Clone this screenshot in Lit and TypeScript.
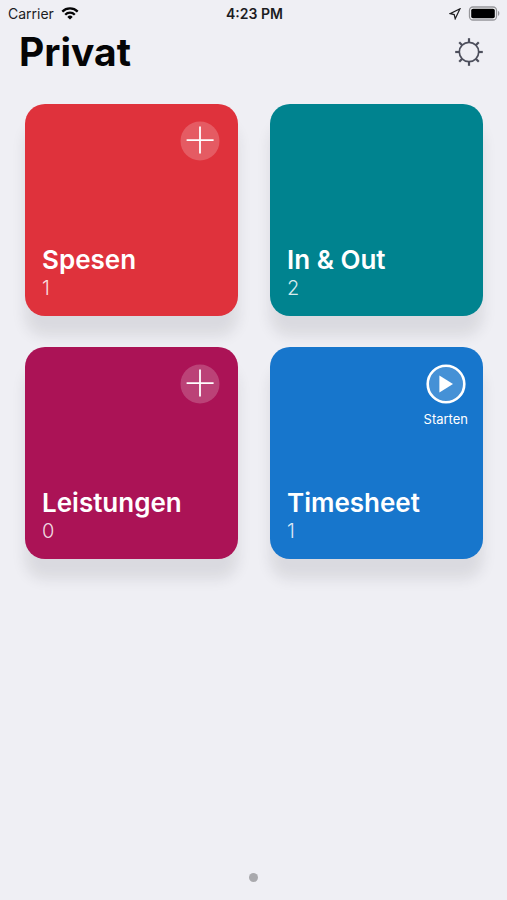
import { LitElement, html, css, svg, nothing } from "lit";
import { customElement } from "lit/decorators.js";

type Action = "add" | "start" | "none";

interface Category {
  name: string;
  count: number;
  color: string;
  action: Action;
}

const categories: Category[] = [
  { name: "Spesen", count: 1, color: "#df323c", action: "add" },
  { name: "In & Out", count: 2, color: "#00838f", action: "none" },
  { name: "Leistungen", count: 0, color: "#ab1356", action: "add" },
  { name: "Timesheet", count: 1, color: "#1776cc", action: "start" },
];

@customElement("status-bar")
export class StatusBar extends LitElement {
  static styles = css`
    :host {
      display: grid;
      grid-template-columns: 1fr auto 1fr;
      align-items: center;
      height: 28px;
      padding: 0 6px 0 8px;
      font-size: 14px;
      line-height: 20px;
      color: #1c1c1f;
    }
    .side {
      display: flex;
      align-items: center;
      gap: 7px;
    }
    .end {
      justify-content: flex-end;
    }
    .time {
      font-weight: 600;
    }
    svg {
      display: block;
    }
  `;

  render() {
    return html`
      <div class="side">
        <span>Carrier</span>
        <svg width="18" height="14" viewBox="0 0 18 14" fill="none" stroke="#050506" stroke-width="2.3" aria-label="WLAN">
          <path d="M1.3 4.6a11 11 0 0 1 15.4 0" />
          <path d="M4.2 7.7a6.8 6.8 0 0 1 9.6 0" />
          <path d="M9 12.6 6.3 9.9a3.8 3.8 0 0 1 5.4 0z" fill="#050506" stroke="none" />
        </svg>
      </div>
      <span class="time">4:23 PM</span>
      <div class="side end">
        <svg width="12" height="12" viewBox="0 0 12 12" fill="none" stroke="#1c1c1f" stroke-width="1.2" stroke-linejoin="miter" aria-label="Ortung">
          <path d="M11 .8 1.2 5.6 5.2 6.6 6.2 10.8z" />
        </svg>
        <svg width="33" height="16" viewBox="0 0 33 16" aria-label="Batterie">
          <rect x="1.5" y="1" width="27" height="13" rx="3.5" fill="#f6f6f8" stroke="#96969a" stroke-width="1.3" />
          <rect x="3.2" y="2.7" width="23.6" height="9.6" rx="1.8" fill="#000" />
          <path d="M30 5.1c1.8.4 1.8 4.4 0 4.8z" fill="#96969a" />
        </svg>
      </div>
    `;
  }
}

@customElement("category-card")
export class CategoryCard extends LitElement {
  static properties = { category: { attribute: false } };
  declare category: Category;

  static styles = css`
    :host {
      display: block;
    }
    .card {
      box-sizing: border-box;
      display: flex;
      flex-direction: column;
      justify-content: space-between;
      aspect-ratio: 213 / 212;
      padding: 17px 15px 16px 17px;
      border-radius: 20px;
      color: #fff;
      box-shadow: 0 20px 14px 0 rgba(40, 40, 50, 0.1);
    }
    .top {
      display: flex;
      justify-content: flex-end;
    }
    .action {
      display: flex;
      flex-direction: column;
      align-items: center;
      gap: 6px;
      padding: 0;
      border: 0;
      background: none;
      color: inherit;
      font: inherit;
      font-size: 13px;
      line-height: 18px;
      cursor: pointer;
    }
    .add {
      margin-right: 3px;
    }
    svg {
      display: block;
    }
    h2 {
      margin: 0;
      font-size: 26px;
      line-height: 32px;
      font-weight: 600;
    }
    p {
      margin: 0;
      font-size: 20px;
      line-height: 24px;
      font-weight: 300;
      color: rgba(255, 255, 255, 0.85);
    }
  `;

  private renderAction(action: Action) {
    if (action === "none") return nothing;
    const add = action === "add";
    return html`
      <button class="action ${action}" aria-label=${add ? "Hinzufügen" : "Starten"}>
        <svg width="40" height="40" viewBox="0 0 40 40">
          ${add
            ? svg`<circle cx="20" cy="20" r="19.5" fill="#fff" fill-opacity=".2" />
                <path d="M20 5.6v27M6.6 19.1h27" stroke="#fff" stroke-width="1.8" />`
            : svg`<circle cx="20" cy="20" r="18.3" fill="#fff" fill-opacity=".2" />
                <circle cx="20" cy="20" r="18.3" fill="none" stroke="#fff" stroke-width="2.6" />
                <path d="M13.4 11.6v16.8L27 20z" fill="#fff" />`}
        </svg>
        ${add ? nothing : html`<span>Starten</span>`}
      </button>
    `;
  }

  render() {
    const { name, count, color, action } = this.category;
    return html`
      <article class="card" style="background:${color}">
        <div class="top">${this.renderAction(action)}</div>
        <div>
          <h2>${name}</h2>
          <p>${count}</p>
        </div>
      </article>
    `;
  }
}

@customElement("app-root")
export class AppRoot extends LitElement {
  static styles = css`
    :host {
      display: flex;
      flex-direction: column;
      min-height: 100vh;
      background: #efeff4;
      font-family: Inter, "Liberation Sans", sans-serif;
      color: #050506;
    }
    header {
      display: flex;
      align-items: center;
      justify-content: space-between;
      padding: 0 23px 0 19px;
    }
    h1 {
      margin: 0;
      font-size: 39px;
      line-height: 48px;
      font-weight: 700;
    }
    .settings {
      padding: 0;
      border: 0;
      background: none;
      cursor: pointer;
    }
    svg {
      display: block;
    }
    main {
      display: grid;
      grid-template-columns: repeat(2, 1fr);
      gap: 31px 32px;
      padding: 28px 24px 28px 25px;
    }
    category-card {
      min-width: 0;
    }
    footer {
      display: flex;
      justify-content: center;
      margin-top: auto;
      padding-bottom: 18px;
    }
    .dot {
      width: 9px;
      height: 9px;
      border-radius: 50%;
      background: #a9a9ad;
    }
  `;

  render() {
    const rays = [0, 45, 90, 135, 180, 225, 270, 315];
    return html`
      <status-bar></status-bar>
      <header>
        <h1>Privat</h1>
        <button class="settings" aria-label="Einstellungen">
          <svg width="30" height="30" viewBox="0 0 30 30" fill="none" stroke="#4d4f5c">
            <circle cx="15" cy="15" r="9.7" stroke-width="1.7" />
            ${rays.map((a) => svg`<path d="M15 5.4V1.2" stroke-width="2.2" transform="rotate(${a} 15 15)" />`)}
          </svg>
        </button>
      </header>
      <main>
        ${categories.map((c) => html`<category-card .category=${c}></category-card>`)}
      </main>
      <footer><span class="dot"></span></footer>
    `;
  }
}
